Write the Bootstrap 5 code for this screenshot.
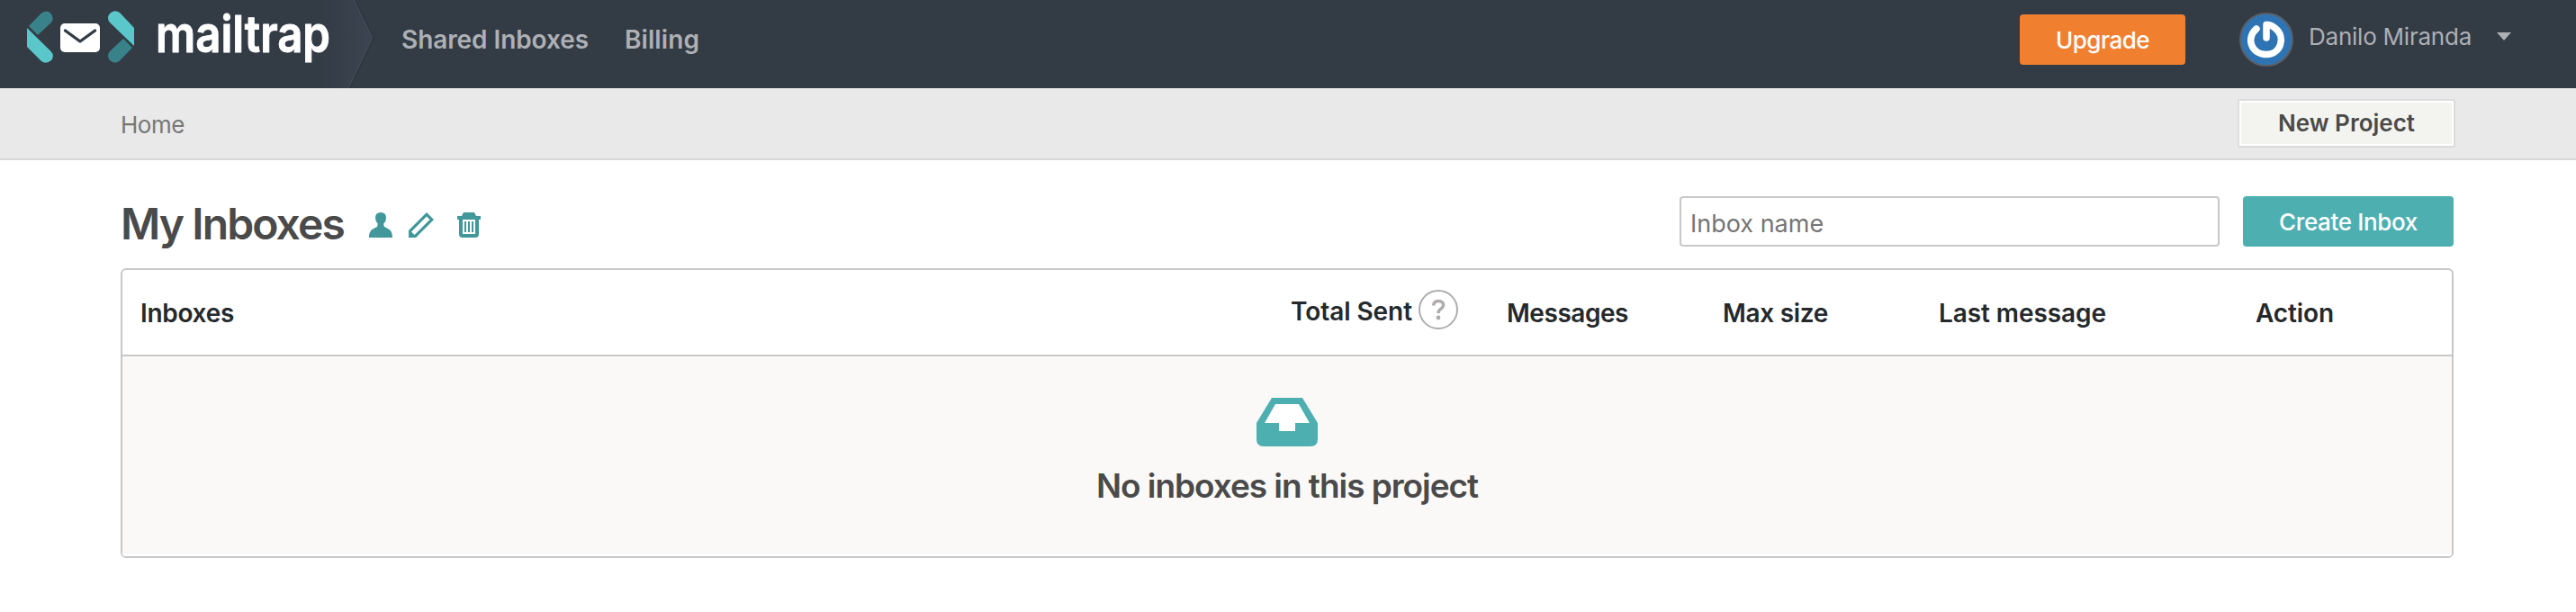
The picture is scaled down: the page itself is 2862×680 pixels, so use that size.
<!DOCTYPE html>
<html lang="en">
<head>
<meta charset="utf-8">
<title>Mailtrap</title>
<link rel="stylesheet" href="https://cdn.jsdelivr.net/npm/bootstrap@5.3.0/dist/css/bootstrap.min.css">
<style>
  body { font-family: Inter, "Liberation Sans", sans-serif; font-size: 26px; color: #4a4a4a; background: #fff; line-height: 32px; overflow: hidden; }
  .fit { display: inline-block; white-space: nowrap; }
  .topbar { height: 98px; background: #333b45; padding: 0 72px 0 30px; }
  .brand-logo { width: 386px; height: 98px; }
  .main-nav { margin: 27px 0 0 30px; gap: 40px; }
  .topbar .nav-link { color: #adb0b5; font-weight: 600; font-size: 28px; line-height: 34px; padding: 0; }
  .upgrade { background: #f08030; border: 0; color: #fff; width: 184px; height: 56px; border-radius: 4px; font-size: 26px; font-weight: 500; padding: 0; margin-top: 16px; }
  .avatar { margin: 14px 0 0 60px; }
  .account { color: #adb0b5; margin: 25px 0 0 17px; }
  .account svg { margin: 11px 0 0 28px; }
  .crumbs { height: 80px; background: #e9e9e9; border-bottom: 2px solid #d8d8d8; padding: 0 134px; }
  .crumbs a { color: #777; margin-top: 25px; }
  .new-project { width: 242px; height: 54px; border: 2px solid #dcdcdc; border-radius: 2px; background: #f3f4ef; box-shadow: inset 0 0 0 2px #fff; color: #4a4a4a; font-weight: 600; font-size: 26px; padding: 0; line-height: 48px; margin-top: 12px; }
  .page { padding: 0 136px 0 134px; }
  .heading { height: 120px; }
  .heading h1 { font-size: 48px; line-height: 58px; font-weight: 600; color: #4a4a4a; margin: 42px 0 0; }
  .ico { fill: #419799; margin: 56px 0 0 26px; }
  .inbox-name { width: 600px; height: 56px; border: 2px solid #c8c8c8; border-radius: 4px; padding: 4px 10px 0; font-size: 27px; margin-top: 40px; }
  .inbox-name::placeholder { color: #757575; }
  .create { width: 234px; height: 56px; margin: 40px 0 0 26px; border: 0; border-radius: 4px; background: #4eafb1; color: #fff; font-size: 26px; font-weight: 500; padding: 0; }
  .inboxes { border: 2px solid #c8c8c8; border-radius: 6px; height: 322px; overflow: hidden; }
  .cols { height: 96px; border-bottom: 2px solid #c8c8c8; display: grid; grid-template-columns: 1278px 240px 240px 240px 352px 1fr; padding-left: 20px; color: #25292c; font-weight: 600; font-size: 28px; line-height: 34px; }
  .cols > div { padding-top: 31px; }
  .cols > .sent { padding-top: 22px; }
  .sent .fit { margin-top: 7px; }
  .sent svg { margin-left: 7px; }
  .empty { height: 222px; background: #faf9f7; border-bottom: 2px solid #fff; padding-top: 46px; }
  .empty p { font-size: 37px; line-height: 44px; font-weight: 600; margin: 22px 0 0; }
</style>
<script src="https://cdn.jsdelivr.net/npm/bootstrap@5.3.0/dist/js/bootstrap.bundle.min.js"></script>
</head>
<body>
<header class="topbar d-flex align-items-start">
  <a href="#" class="flex-shrink-0 d-block" aria-label="mailtrap">
    <svg class="brand-logo d-block" viewBox="30 0 386 98">
      <defs><linearGradient id="fold"><stop offset="0" stop-color="#3b4450" stop-opacity="0"/><stop offset="1" stop-color="#3b4450"/></linearGradient></defs>
      <path d="M355 0H393L414 42L387 98H355Z" fill="url(#fold)"/>
      <path d="M393 0L413.500 42L387 98" fill="none" stroke="#434b56" stroke-width="1.200"/>
      <path d="M395 0L415.500 42L389 98" fill="none" stroke="#2d343d" stroke-width="1"/>
      <path d="M32 29L45 15.500Q51 10 56 14.500Q61 20 57 25L42 39Z" fill="#39828a"/>
      <path d="M30 31L56.500 57Q61 62 57 67Q51 72 46 68L30 52Z" fill="#5ac8cb"/>
      <path d="M149 31V51L122 25Q118 20 122 15Q127 10 133 14Z" fill="#5ac8cb"/>
      <path d="M137 43L147 53L133 67.500Q128 72 122 67Q118 62 122 57Z" fill="#39828a"/>
      <rect x="67" y="26" width="44" height="32" rx="5" fill="#fff"/>
      <path d="M72.500 34L89 46L105.500 34" fill="none" stroke="#333b45" stroke-width="3.400" stroke-linecap="round" stroke-linejoin="round"/>
      <text x="173" y="57.500" textLength="194" lengthAdjust="spacingAndGlyphs" font-family="Inter, sans-serif" font-size="56" font-weight="600" fill="#fff" stroke="#fff" stroke-width="1" stroke-linejoin="round">mailtrap</text>
    </svg>
  </a>
  <nav class="nav flex-nowrap main-nav">
    <a class="nav-link" href="#"><span class="fit" data-w="208">Shared Inboxes</span></a>
    <a class="nav-link" href="#"><span class="fit" data-w="83">Billing</span></a>
  </nav>
  <button class="btn upgrade ms-auto"><span class="fit" data-w="104">Upgrade</span></button>
  <svg class="flex-shrink-0 avatar" width="60" height="60" viewBox="0 0 60 60">
    <circle cx="30" cy="30" r="29" fill="#2e74b5" stroke="#5b6068" stroke-width="2"/>
    <path d="M19 18C7 28 13 46.500 30 46.500C46 46.500 52 27 40 17.500Q35 13 30 13.500V28" fill="none" stroke="#fff" stroke-width="7.500" stroke-linecap="round" stroke-linejoin="round"/>
  </svg>
  <a href="#" class="account d-flex text-decoration-none"><span class="fit" data-w="181">Danilo Miranda</span>
    <svg width="16" height="9" viewBox="0 0 16 9"><path d="M0 0H16L8 9Z" fill="#adb0b5"/></svg></a>
</header>
<div class="crumbs d-flex justify-content-between align-items-start">
  <a href="#" class="text-decoration-none"><span class="fit" data-w="71">Home</span></a>
  <button class="btn new-project"><span class="fit" data-w="152">New Project</span></button>
</div>
<main class="page">
  <div class="heading d-flex align-items-start">
    <h1><span class="fit" data-w="248">My Inboxes</span></h1>
    <svg class="ico flex-shrink-0" width="128" height="30" viewBox="408 234 128 30">
      <path d="M410 264C410 255 415 254 419 252Q420 250 419.500 248Q417 246 417 242Q417 236 423 236Q429 236 429 242Q429 246 426.500 248Q426 250 427 252C431 254 436 255 436 264Z"/>
      <path fill-rule="evenodd" d="M474 236L482 244L462 264H454V256ZM474 240.500L457 257.500L460.500 261L477.500 244Z"/>
      <path fill-rule="evenodd" d="M515 236H527L529 240H534V244H532V260Q532 264 528 264H514Q510 264 510 260V244H508V240H513ZM514 244V260H528V244Z"/>
      <path d="M516 246h2v12h-2zM520 246h2v12h-2zM524 246h2v12h-2z"/>
    </svg>
    <input class="form-control inbox-name ms-auto" placeholder="Inbox name">
    <button class="btn create"><span class="fit" data-w="154">Create Inbox</span></button>
  </div>
  <section class="inboxes">
    <div class="cols">
      <div><span class="fit" data-w="104">Inboxes</span></div>
      <div class="sent d-flex align-items-start"><span class="fit" data-w="135">Total Sent</span>
        <svg width="44" height="44" viewBox="0 0 44 44"><circle cx="22" cy="22" r="21" fill="none" stroke="#b0acac" stroke-width="2"/><path d="M16.500 17.500Q17 12.500 22 12.500Q28 12.500 27.500 17.500Q27 20 24.500 21.500Q22 23 22 26" fill="none" stroke="#b0acac" stroke-width="3.500"/><circle cx="22" cy="31" r="2.400" fill="#b0acac"/></svg></div>
      <div><span class="fit" data-w="135">Messages</span></div>
      <div><span class="fit" data-w="117">Max size</span></div>
      <div><span class="fit" data-w="186">Last message</span></div>
      <div><span class="fit" data-w="87">Action</span></div>
    </div>
    <div class="empty text-center">
      <svg class="d-block mx-auto" width="68" height="54" viewBox="0 0 68 54"><path fill="#4eafb1" d="M17 0H51L68 28V46Q68 54 60 54H8Q0 54 0 46V28Z"/><path fill="#fff" d="M21 7H47L59 28H43V37H25V28H9Z"/></svg>
      <p><span class="fit" data-w="424">No inboxes in this project</span></p>
    </div>
  </section>
</main>
<script>
  // Track each label so that it takes its designed width
  document.querySelectorAll('.fit').forEach(function (el) {
    var n = el.textContent.length;
    var s = (el.dataset.w - el.getBoundingClientRect().width) / n;
    el.style.letterSpacing = s + 'px';
  });
</script>
</body>
</html>
